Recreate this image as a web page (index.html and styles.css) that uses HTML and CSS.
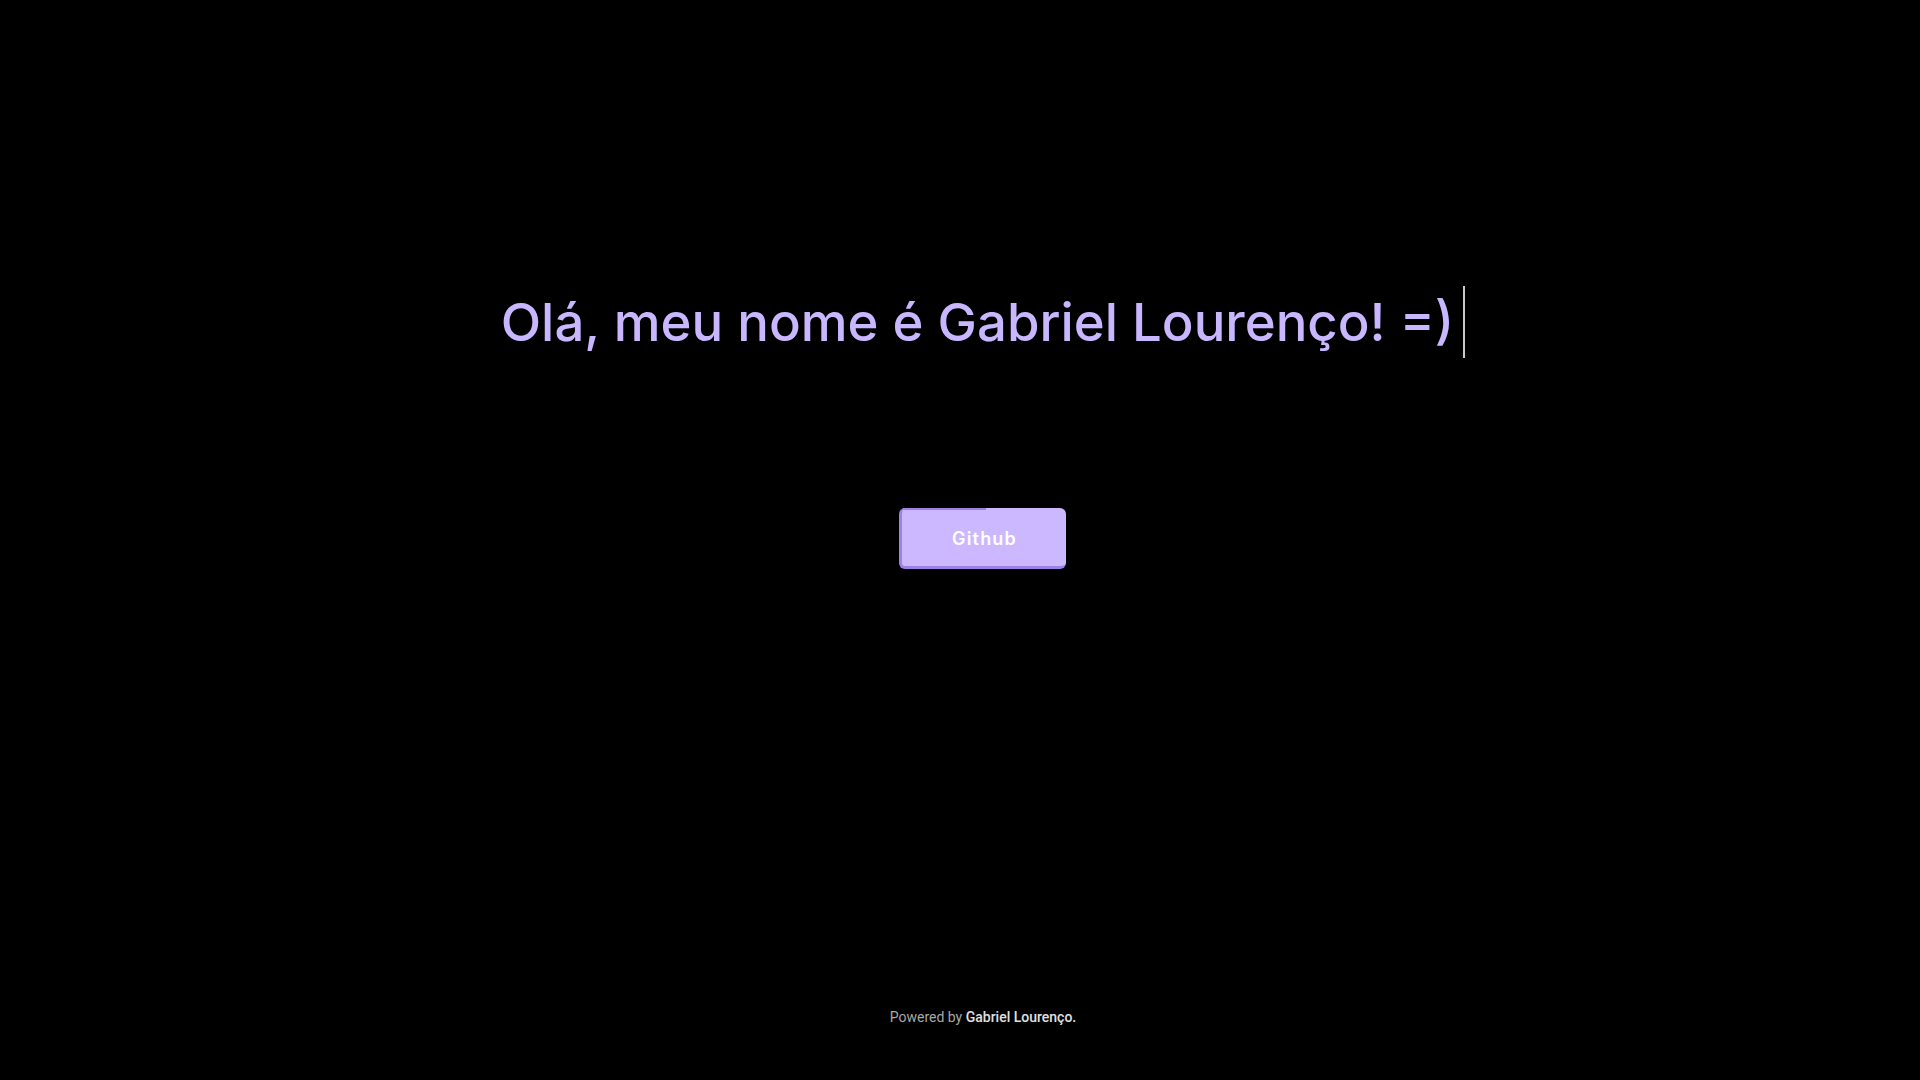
FILE: index.html
```html
<!DOCTYPE html>
<html lang="pt-BR">
<head>
<meta charset="utf-8">
<title>Gabriel Lourenço</title>
<link rel="stylesheet" href="styles.css">
</head>
<body>
<div class="page">
  <main class="hero">
    <h1 class="title"><span class="typed">Olá, meu nome é Gabriel Lourenço! =)</span><span class="caret"></span></h1>
    <a class="btn" href="#">Github</a>
  </main>
  <footer class="footer">Powered by <strong>Gabriel Lourenço.</strong></footer>
</div>
</body>
</html>
```
FILE: styles.css
```css
html, body {
  margin: 0;
  padding: 0;
  background: #000;
  height: 100%;
}
.page {
  height: 1080px;
  display: flex;
  flex-direction: column;
  align-items: center;
  padding-left: 46px;
  box-sizing: border-box;
}
.hero {
  display: flex;
  flex-direction: column;
  align-items: center;
  flex: 1;
}
.title {
  margin: 286px 0 0 0;
  font-family: Inter, "DejaVu Sans", sans-serif;
  font-weight: 500;
  font-size: 52.7px;
  letter-spacing: 0;
  line-height: 72px;
  color: #c8b6ff;
  display: flex;
  align-items: center;
}
.caret {
  display: inline-block;
  width: 2px;
  height: 72px;
  background: #c9c9c9;
  margin-left: 9px;
}
.btn {
  margin-top: 150px;
  position: relative;
  width: 167px;
  height: 61px;
  box-sizing: border-box;
  display: flex;
  align-items: center;
  justify-content: center;
  background: #cbb8ff;
  border-radius: 6px;
  border-left: 3px solid #9c82e6;
  border-bottom: 3px solid #9c82e6;
  color: #fff;
  font-family: Inter, "DejaVu Sans", sans-serif;
  font-weight: 600;
  font-size: 18px;
  letter-spacing: 1.2px;
  text-decoration: none;
  padding-top: 2px;
}
.btn::before {
  content: "";
  position: absolute;
  top: 0;
  left: 0;
  width: 84px;
  height: 2px;
  background: #9c82e6;
  border-top-left-radius: 6px;
}
.footer {
  margin-bottom: 55px;
  font-family: Roboto, "Liberation Sans", sans-serif;
  font-size: 14px;
  color: #a8a8a8;
}
.footer strong {
  font-weight: 500;
  color: #e0e0e0;
}
```
